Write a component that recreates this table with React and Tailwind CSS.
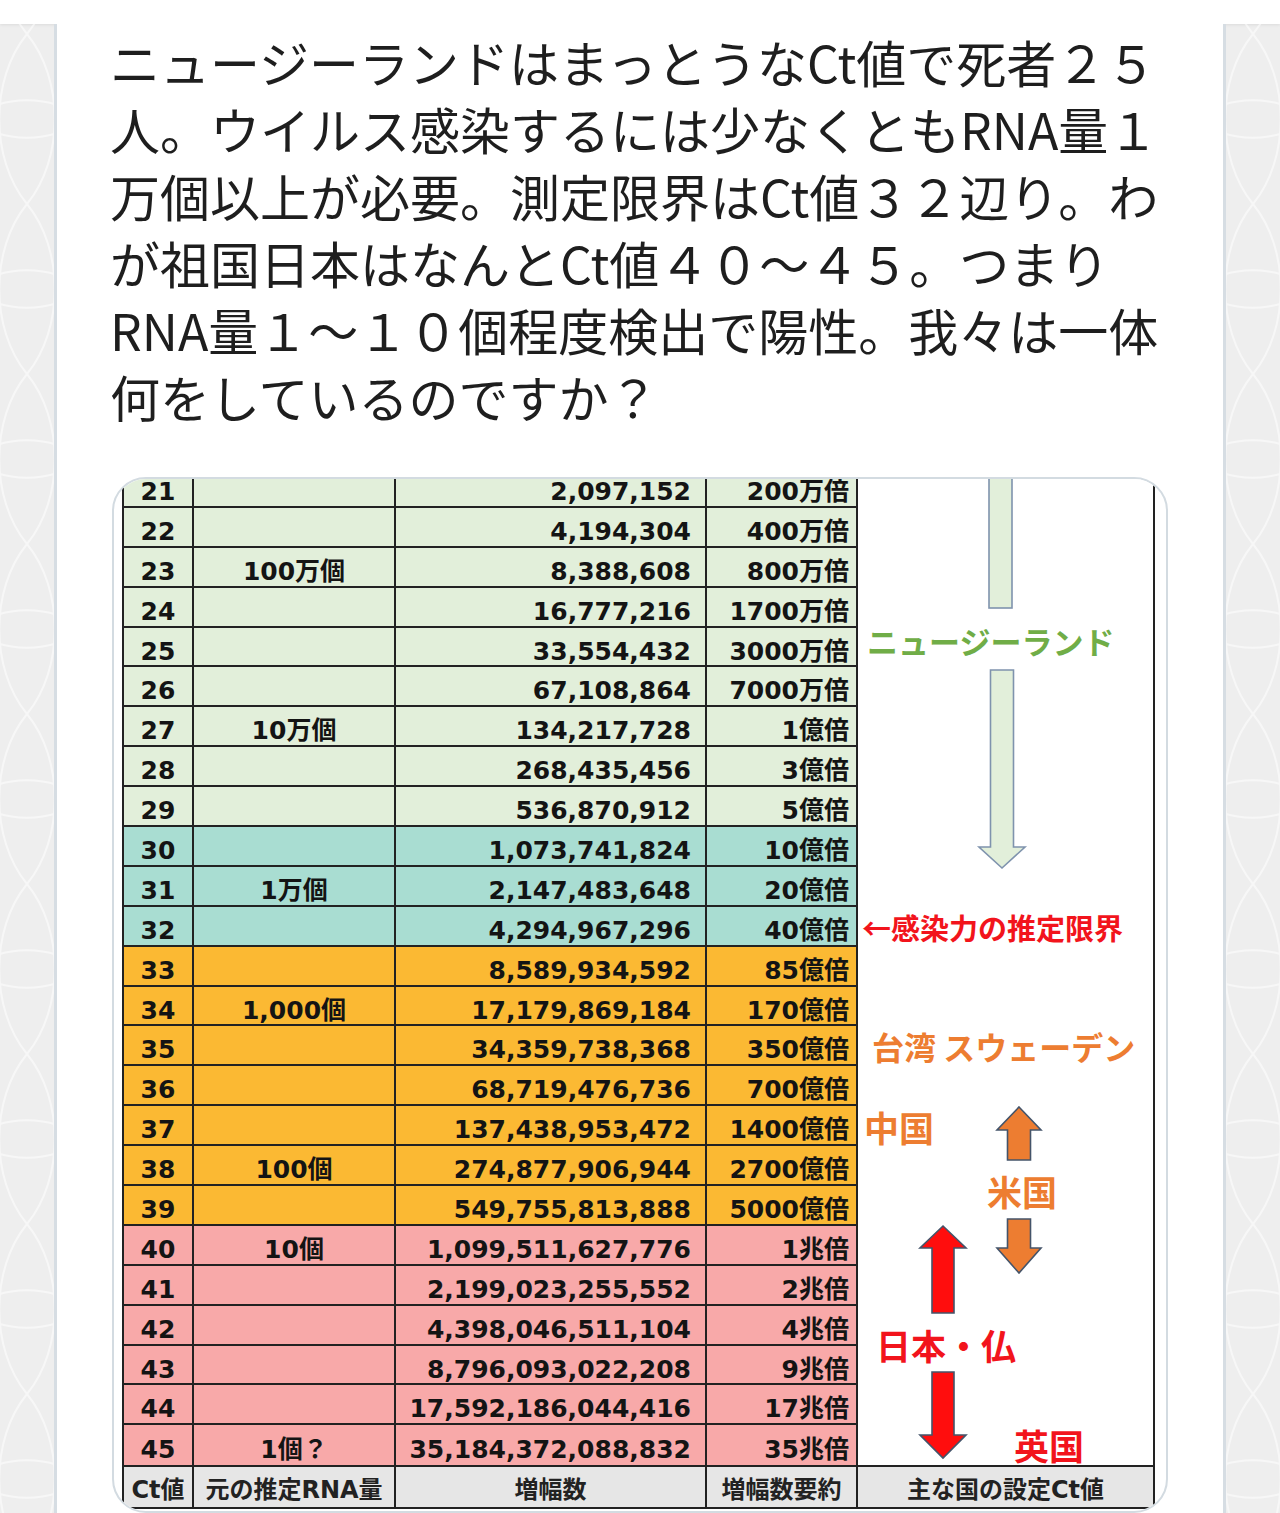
import React from "react";

const rows = [
  ["21", "", "2,097,152", "200万倍", "g"],
  ["22", "", "4,194,304", "400万倍", "g"],
  ["23", "100万個", "8,388,608", "800万倍", "g"],
  ["24", "", "16,777,216", "1700万倍", "g"],
  ["25", "", "33,554,432", "3000万倍", "g"],
  ["26", "", "67,108,864", "7000万倍", "g"],
  ["27", "10万個", "134,217,728", "1億倍", "g"],
  ["28", "", "268,435,456", "3億倍", "g"],
  ["29", "", "536,870,912", "5億倍", "g"],
  ["30", "", "1,073,741,824", "10億倍", "t"],
  ["31", "1万個", "2,147,483,648", "20億倍", "t"],
  ["32", "", "4,294,967,296", "40億倍", "t"],
  ["33", "", "8,589,934,592", "85億倍", "o"],
  ["34", "1,000個", "17,179,869,184", "170億倍", "o"],
  ["35", "", "34,359,738,368", "350億倍", "o"],
  ["36", "", "68,719,476,736", "700億倍", "o"],
  ["37", "", "137,438,953,472", "1400億倍", "o"],
  ["38", "100個", "274,877,906,944", "2700億倍", "o"],
  ["39", "", "549,755,813,888", "5000億倍", "o"],
  ["40", "10個", "1,099,511,627,776", "1兆倍", "p"],
  ["41", "", "2,199,023,255,552", "2兆倍", "p"],
  ["42", "", "4,398,046,511,104", "4兆倍", "p"],
  ["43", "", "8,796,093,022,208", "9兆倍", "p"],
  ["44", "", "17,592,186,044,416", "17兆倍", "p"],
  ["45", "1個？", "35,184,372,088,832", "35兆倍", "p"],
];

const bgOf = {
  g: "bg-[#e2efda]",
  t: "bg-[#a9ddd2]",
  o: "bg-[#fbb933]",
  p: "bg-[#f8a9a9]",
};

const lines = [
  "ニュージーランドはまっとうなCt値で死者２５",
  "人。ウイルス感染するには少なくともRNA量１",
  "万個以上が必要。測定限界はCt値３２辺り。わ",
  "が祖国日本はなんとCt値４０〜４５。つまり",
  "RNA量１〜１０個程度検出で陽性。我々は一体",
  "何をしているのですか？",
];

function Gutter({ id }) {
  return (
    <div className="w-[54px] shrink-0 overflow-hidden">
      <svg width="54" height="100%" className="block h-full w-[54px]">
        <defs>
          <pattern id={id} width="110" height="170" patternUnits="userSpaceOnUse" x="-28" y="10">
            <path
              d="M55 0 C 18 45, 18 125, 55 170 M55 0 C 92 45, 92 125, 55 170 M0 85 C 30 60, 80 60, 110 85 M0 85 C 30 110, 80 110, 110 85"
              fill="none"
              stroke="#ffffff"
              strokeWidth="2"
              strokeOpacity="0.55"
            />
          </pattern>
        </defs>
        <rect width="100%" height="100%" fill={`url(#${id})`} />
      </svg>
    </div>
  );
}

function DataRow({ r, last }) {
  const [ct, rna, amp, sum, c] = r;
  return (
    <div
      className={`flex h-[39.9px] ${last ? "" : "border-b-2"} border-[#222] ${bgOf[c]}`}
    >
      <div className="flex w-[70px] items-center justify-center border-r-2 border-[#222] pt-[9px] leading-[25px]">
        {ct}
      </div>
      <div className="flex w-[202px] items-center justify-center border-r-2 border-[#222] pt-[9px] leading-[25px]">
        {rna}
      </div>
      <div className="flex w-[311px] items-center justify-end border-r-2 border-[#222] pr-[14px] pt-[9px] leading-[25px]">
        {amp}
      </div>
      <div className="flex w-[151px] items-center justify-end border-r-2 border-[#222] pr-[7px] pt-[9px] leading-[25px]">
        {sum}
      </div>
    </div>
  );
}

function Annotations() {
  const lbl = "absolute whitespace-nowrap font-bold font-['Noto_Sans_CJK_JP',sans-serif]";
  return (
    <div className="relative w-[295px] bg-white">
      <svg className="absolute left-0 top-0" width="295" height="998" viewBox="0 0 295 998">
        <rect x="131" y="-6" width="23" height="146" fill="#e2efda" stroke="#7f93ad" strokeWidth="1.6" />
        <polygon
          points="132.5,202 155.5,202 155.5,379 167,379 144,400 121,379 132.5,379"
          fill="#e2efda"
          stroke="#7f93ad"
          strokeWidth="1.6"
          strokeLinejoin="miter"
        />
        <polygon
          points="161,639 183,662 172.5,662 172.5,692 149.5,692 149.5,662 139,662"
          fill="#ed7d31"
          stroke="#44546a"
          strokeWidth="1.6"
        />
        <polygon
          points="149.5,751 172.5,751 172.5,780 183,780 161,805 139,780 149.5,780"
          fill="#ed7d31"
          stroke="#44546a"
          strokeWidth="1.6"
        />
        <polygon
          points="85,758 108,780 96,780 96,845 74,845 74,780 62,780"
          fill="#ff0d0d"
          stroke="#44546a"
          strokeWidth="1.6"
        />
        <polygon
          points="74,904 96,904 96,967 108,967 85,990 62,967 74,967"
          fill="#ff0d0d"
          stroke="#44546a"
          strokeWidth="1.6"
        />
      </svg>
      <span className={`${lbl} left-[9px] top-[157px] text-[31px] leading-[31px] text-[#70ad47]`}>
        ニュージーランド
      </span>
      <span className={`${lbl} left-[4px] top-[445px] text-[29px] leading-[29px] text-[#f2141c]`}>
        ←感染力の推定限界
      </span>
      <span className={`${lbl} left-[14px] top-[562px] text-[32px] leading-[32px] text-[#ed7d31]`}>
        台湾 スウェーデン
      </span>
      <span className={`${lbl} left-[6px] top-[641px] text-[35px] leading-[35px] text-[#ed7d31]`}>
        中国
      </span>
      <span className={`${lbl} left-[129px] top-[705px] text-[35px] leading-[35px] text-[#ed7d31]`}>
        米国
      </span>
      <span className={`${lbl} left-[18px] top-[859px] text-[35px] leading-[35px] text-[#f2141c]`}>
        日本・仏
      </span>
      <span className={`${lbl} left-[156px] top-[959px] text-[35px] leading-[35px] text-[#f2141c]`}>
        英国
      </span>
    </div>
  );
}

function ChartImage() {
  return (
    <div className="mt-[47px] w-[1056px] overflow-hidden rounded-[34px] border-2 border-[#d3dbe1] bg-white pb-[2px]">
      <div className="-mt-[11px] ml-[8px] w-[1033px] border-x-2 border-[#222] font-['DejaVu_Sans','Noto_Sans_CJK_JP',sans-serif] text-[25px] font-bold text-[#141414]">
        <div className="flex">
          <div className="w-[734px]">
            {rows.map((r, i) => (
              <DataRow key={r[0]} r={r} last={i === rows.length - 1} />
            ))}
          </div>
          <Annotations />
        </div>
        <div className="flex h-[44px] border-y-2 border-[#222] bg-[#e6e6e6] text-[24px] text-[#222]">
          <div className="flex w-[70px] items-center justify-center border-r-2 border-[#222] pt-[6px] leading-[24px]">
            Ct値
          </div>
          <div className="flex w-[202px] items-center justify-center border-r-2 border-[#222] pt-[6px] leading-[24px]">
            元の推定RNA量
          </div>
          <div className="flex w-[311px] items-center justify-center border-r-2 border-[#222] pt-[6px] leading-[24px]">
            増幅数
          </div>
          <div className="flex w-[151px] items-center justify-center border-r-2 border-[#222] pt-[6px] leading-[24px]">
            増幅数要約
          </div>
          <div className="flex flex-1 items-center justify-center pt-[6px] leading-[24px]">
            主な国の設定Ct値
          </div>
        </div>
      </div>
    </div>
  );
}

export default function App() {
  return (
    <div className="min-h-[1513px] bg-[#eeeeee]">
      <div className="h-[24px] bg-white shadow-[0_1px_3px_rgba(0,0,0,0.08)]" />
      <div className="flex">
        <Gutter id="patL" />
        <div className="w-[1172px] shrink-0 border-x-[3px] border-[#d6dde3] bg-white px-[55px] pb-[60px] pt-[4px]">
          <div className="-ml-[2px] font-['Noto_Sans_CJK_JP',sans-serif] text-[50px] leading-[67px] text-[#1e1e1e]">
            {lines.map((l) => (
              <div key={l} className="whitespace-nowrap">
                {l}
              </div>
            ))}
          </div>
          <ChartImage />
        </div>
        <Gutter id="patR" />
      </div>
    </div>
  );
}
